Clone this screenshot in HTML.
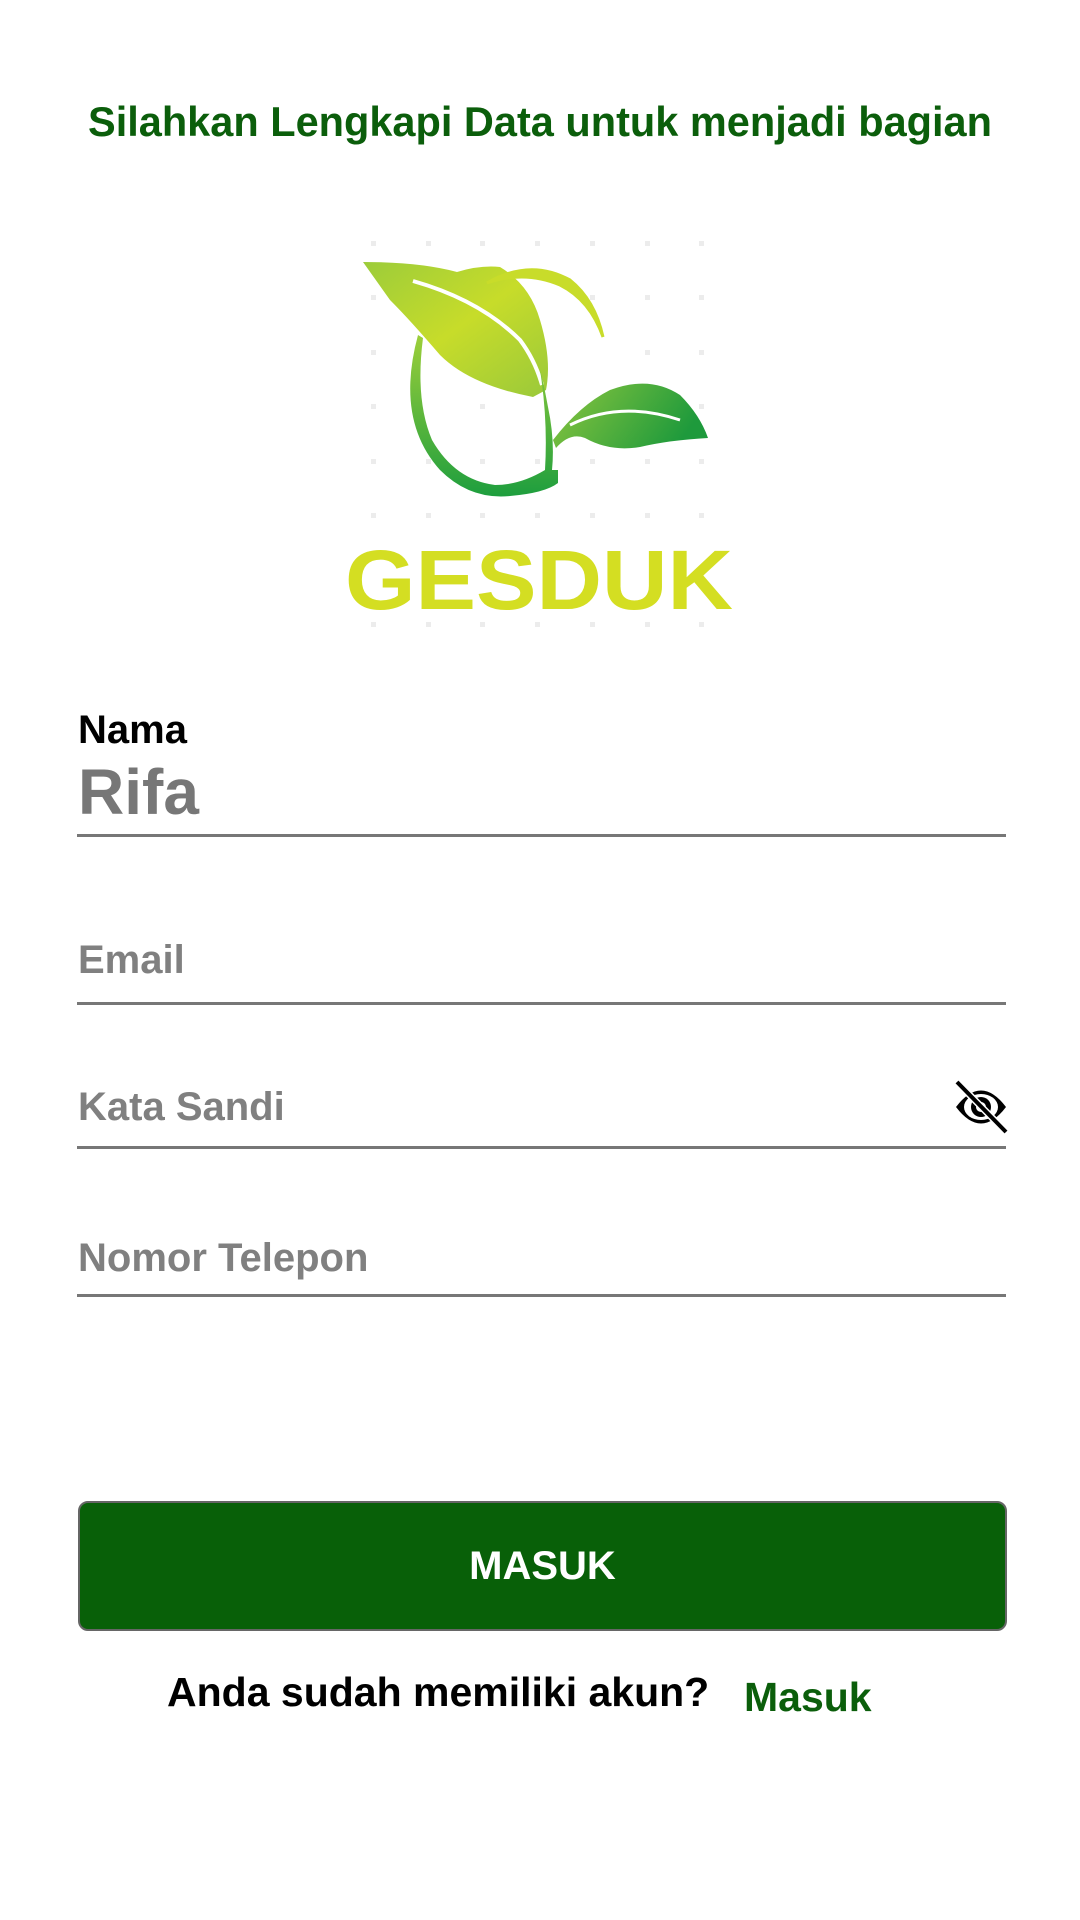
<!DOCTYPE html>
<html><head><meta charset="utf-8"><style>
html,body{margin:0;padding:0;background:#fff;width:1080px;height:1920px;overflow:hidden;font-family:"Liberation Sans",sans-serif;font-weight:bold}
.a{position:absolute;white-space:nowrap}
.line{position:absolute;left:77px;width:929px;height:3px;background:#777}
.ph{color:#808080;font-size:40px}
</style></head><body>
<div class="a" style="left:0;width:1080px;text-align:center;top:98px;font-size:41.5px;color:#0b5e0b">Silahkan Lengkapi Data untuk menjadi bagian</div>

<svg class="a" style="left:0;top:0" width="1080" height="700" viewBox="0 0 1080 700">
<defs>
<linearGradient id="g1" x1="0" y1="0" x2="1" y2="1"><stop offset="0" stop-color="#9ccc3a"/><stop offset="0.5" stop-color="#c7dc2a"/><stop offset="1" stop-color="#9ac93a"/></linearGradient>
<linearGradient id="g2" x1="0" y1="0" x2="0" y2="1"><stop offset="0" stop-color="#9ccf3a"/><stop offset="1" stop-color="#1e9e3e"/></linearGradient>
<linearGradient id="g3" x1="0" y1="0" x2="1" y2="0.3"><stop offset="0" stop-color="#8cc63e"/><stop offset="1" stop-color="#1e9a3c"/></linearGradient>
</defs>
<g fill="#ececec">
<rect x="371" y="241" width="5" height="5"/><rect x="426" y="241" width="5" height="5"/><rect x="480" y="241" width="5" height="5"/><rect x="535" y="241" width="5" height="5"/><rect x="590" y="241" width="5" height="5"/><rect x="645" y="241" width="5" height="5"/><rect x="699" y="241" width="5" height="5"/>
<rect x="371" y="295" width="5" height="5"/><rect x="590" y="295" width="5" height="5"/><rect x="645" y="295" width="5" height="5"/><rect x="699" y="295" width="5" height="5"/>
<rect x="371" y="350" width="5" height="5"/><rect x="645" y="350" width="5" height="5"/><rect x="699" y="350" width="5" height="5"/>
<rect x="371" y="404" width="5" height="5"/><rect x="480" y="404" width="5" height="5"/><rect x="699" y="404" width="5" height="5"/>
<rect x="371" y="459" width="5" height="5"/><rect x="426" y="459" width="5" height="5"/><rect x="480" y="459" width="5" height="5"/><rect x="535" y="459" width="5" height="5"/><rect x="590" y="459" width="5" height="5"/><rect x="645" y="459" width="5" height="5"/><rect x="699" y="459" width="5" height="5"/>
<rect x="371" y="513" width="5" height="5"/><rect x="426" y="513" width="5" height="5"/><rect x="480" y="513" width="5" height="5"/><rect x="535" y="513" width="5" height="5"/><rect x="590" y="513" width="5" height="5"/><rect x="645" y="513" width="5" height="5"/><rect x="699" y="513" width="5" height="5"/>
<rect x="371" y="622" width="5" height="5"/><rect x="426" y="622" width="5" height="5"/><rect x="480" y="622" width="5" height="5"/><rect x="535" y="622" width="5" height="5"/><rect x="590" y="622" width="5" height="5"/><rect x="645" y="622" width="5" height="5"/><rect x="699" y="622" width="5" height="5"/>
</g>
<path d="M363 262 Q420 262 457 272 Q480 265 500 267 Q530 285 540 320 Q552 360 546 390 L533 397 Q470 385 440 355 Q410 320 390 300 Z" fill="url(#g1)"/>
<path d="M413 281 Q480 300 520 340 Q535 360 542 385" stroke="#fff" stroke-width="4" fill="none"/>
<path d="M487 283 Q530 258 570 280 Q595 300 603 337 Q590 300 560 285 Q525 270 487 283 Z" fill="#c8dc2a" stroke="#c8dc2a" stroke-width="3"/>
<path d="M418 335 Q395 420 440 470 Q470 500 510 496 Q545 493 558 483 L558 470 L552 470 Q555 440 548 407 Q543 380 540 370 Q548 420 545 470 Q520 485 495 485 Q455 480 432 440 Q415 400 423 338 Z" fill="url(#g2)"/>
<path d="M553 440 Q580 405 610 390 Q650 375 680 395 Q700 415 708 438 Q670 440 640 447 Q610 452 585 438 Q570 432 556 448 Z" fill="url(#g3)"/>
<path d="M570 425 Q620 400 680 420" stroke="#fff" stroke-width="3" fill="none"/>
<text x="345" y="609" textLength="388" lengthAdjust="spacingAndGlyphs" font-family="Liberation Sans" font-weight="bold" font-size="84" fill="#d4de22">GESDUK</text>
</svg>

<div class="a" style="left:78px;top:708px;font-size:40px;color:#000">Nama</div>
<div class="a" style="left:78px;top:755px;font-size:64px;color:#777">Rifa</div>
<div class="line" style="top:834px"></div>
<div class="a ph" style="left:78px;top:938px">Email</div>
<div class="line" style="top:1002px"></div>
<div class="a ph" style="left:78px;top:1085px">Kata Sandi</div>
<svg class="a" style="left:953px;top:1080px" width="56" height="54" viewBox="0 0 56 54">
<path d="M3 27 Q28 -6 53 27 Q28 60 3 27 Z" fill="#000"/>
<ellipse cx="28" cy="27" rx="17" ry="13" fill="#fff"/>
<circle cx="28" cy="27" r="10" fill="#000"/>
<circle cx="28" cy="27" r="5" fill="#fff"/>
<line x1="4" y1="2" x2="53" y2="52" stroke="#fff" stroke-width="7"/>
<line x1="4" y1="2" x2="53" y2="52" stroke="#000" stroke-width="4"/>
</svg>
<div class="line" style="top:1146px"></div>
<div class="a ph" style="left:78px;top:1236px">Nomor Telepon</div>
<div class="line" style="top:1294px"></div>

<div class="a" style="left:78px;top:1501px;width:925px;height:126px;background:#086008;border:2px solid #666;border-radius:10px;color:#fff;font-size:40px;text-align:center;line-height:126px">MASUK</div>
<div class="a" style="left:167px;top:1669px;font-size:41px;color:#000">Anda sudah memiliki akun?</div>
<div class="a" style="left:744px;top:1674px;font-size:41px;color:#0b5e0b">Masuk</div>
</body></html>
